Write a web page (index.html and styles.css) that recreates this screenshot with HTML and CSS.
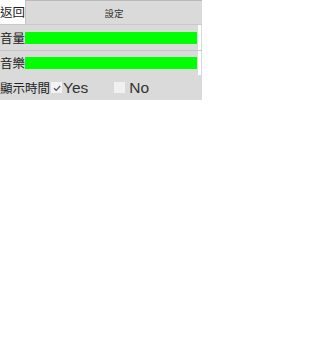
FILE: index.html
```html
<!DOCTYPE html>
<html>
<head>
<meta charset="utf-8">
<link rel="stylesheet" href="styles.css">
</head>
<body>
<div class="app">
  <div class="header">
    <div class="back">返回</div>
    <div class="title">設定</div>
  </div>
  <div class="row">
    <div class="label">音量</div>
    <div class="bar"></div>
    <div class="edge"></div>
  </div>
  <div class="row sep">
    <div class="label">音樂</div>
    <div class="bar"></div>
    <div class="edge"></div>
  </div>
  <div class="row">
    <div class="label">顯示時間</div>
    <span class="box checked"><svg width="10" height="10" viewBox="0 0 10 10"><path d="M2 5.2 L4.2 7.3 L8.2 3" fill="none" stroke="#555" stroke-width="1.2"/></svg></span>
    <span class="opt">Yes</span>
    <span class="box no"></span>
    <span class="opt">No</span>
  </div>
</div>
</body>
</html>
```

FILE: styles.css
```css
body {
  margin: 0;
  font-family: "Noto Sans CJK TC", "Noto Sans", sans-serif;
  color: #222;
  background: #fff;
}
.app {
  background: #dadada;
  width: 202px;
  height: 100px;
}
.header {
  display: flex;
  height: 24px;
  border-bottom: 1px solid #c9c9c9;
}
.back {
  width: 25px;
  background: #fff;
  font-size: 12.5px;
  line-height: 24px;
  white-space: nowrap;
  overflow: hidden;
}
.title {
  flex: 1;
  border-top: 1px solid #b9b9b9;
  border-left: 1px solid #c4c4c4;
  text-align: center;
  font-size: 9.5px;
  line-height: 24px;
  color: #333;
}
.row {
  display: flex;
  align-items: center;
  height: 25px;
}
.row.sep {
  border-top: 1px solid #c6c6c6;
  height: 24px;
}
.label {
  font-size: 12.5px;
  white-space: nowrap;
  line-height: 16px;
}
.bar {
  flex: 1;
  height: 12px;
  background: #00ff00;
}
.edge {
  align-self: stretch;
  width: 3px;
  margin-left: 1px;
  margin-right: 1px;
  background: #fff;
}
.box {
  display: inline-flex;
  align-items: center;
  justify-content: center;
  width: 11px;
  height: 11px;
  background: #f3f3f3;
  margin-left: 1px;
  margin-right: 1px;
}
.box.no {
  margin-left: 26px;
  margin-right: 4px;
  background: #f1f1f1;
}
.opt {
  font-family: "Liberation Sans", Arial, sans-serif;
  font-size: 15.5px;
  color: #333;
}
```
